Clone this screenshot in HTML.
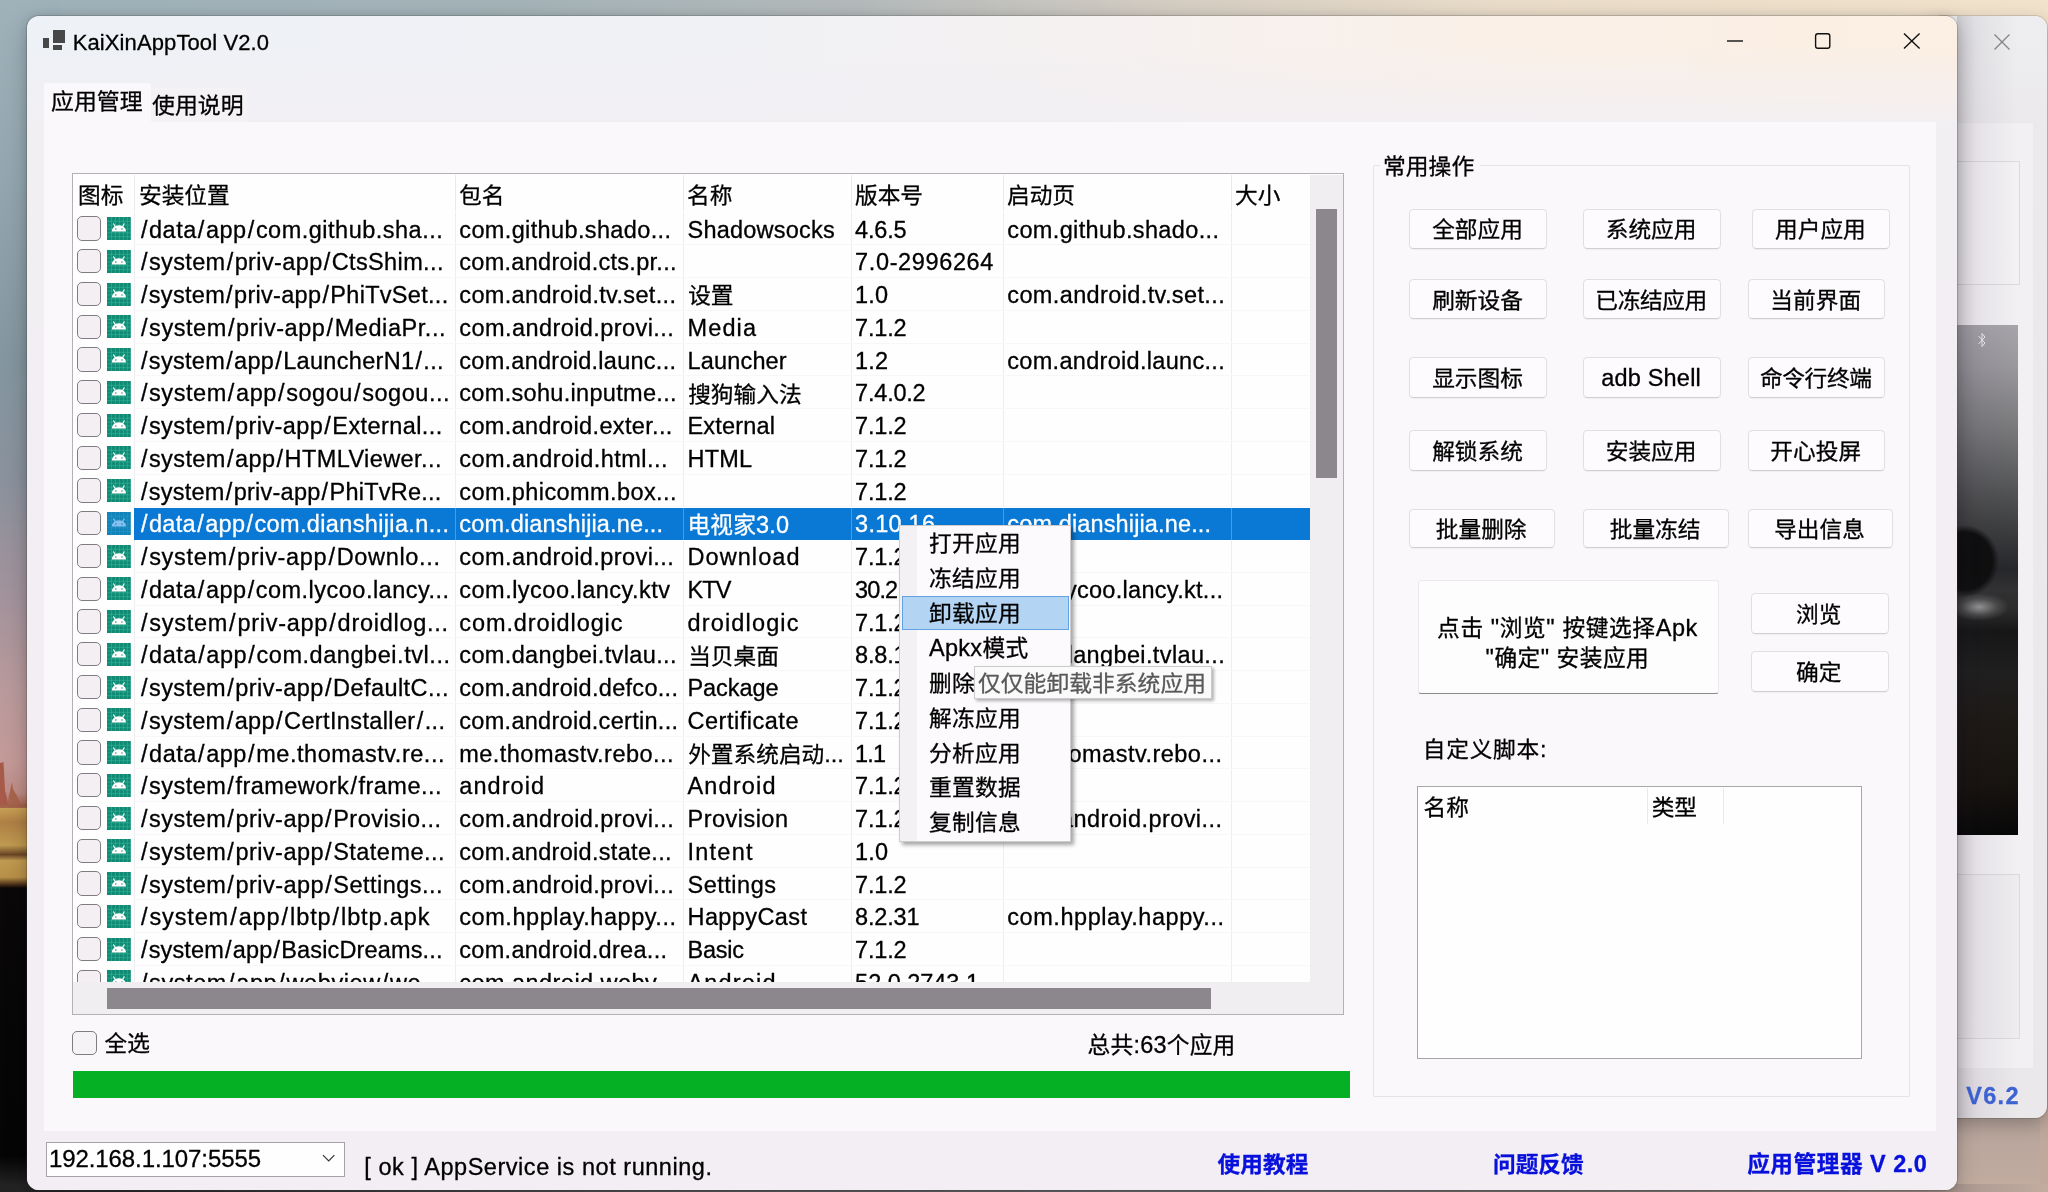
<!DOCTYPE html><html lang="zh-CN"><head><meta charset="utf-8"><title>KaiXinAppTool V2.0</title><style>

html,body{margin:0;padding:0}
body{width:2048px;height:1192px;overflow:hidden;position:relative;background:#8c9ca4;font-family:"Liberation Sans","Noto Sans CJK SC",sans-serif;color:#000}
#root{left:0;top:0;width:2048px;height:1192px;will-change:transform;overflow:hidden}
div,span,svg{position:absolute;box-sizing:border-box}
.t{white-space:pre;line-height:30px;height:30px}
.c{white-space:pre;line-height:30px;height:30px;text-align:center}
.ai{display:block}
i{font-style:normal;font-size:1.035em}
b{font-weight:normal;padding:0 1.1px}
.z,.btn span{transform:scaleY(.955);transform-origin:0 17px}
.t,.c,.btn span{-webkit-text-stroke:0.3px currentColor}
.cb{width:23.8px;height:24.2px;border:1.6px solid #807d82;border-radius:5px;background:#f3eff3}
.btn{border:1px solid #e2dfe3;border-bottom-color:#d2cfd3;border-radius:4.5px;background:#fdfbfd;box-shadow:0 1px 1px rgba(0,0,0,.04)}
.btn span{position:absolute;left:-1.6px;right:0;text-align:center;font-size:22.7px;white-space:pre;line-height:30px}
.gl{background:#f0edf1}

</style></head><body><div id="root">
<div id="wall" style="left:0;top:0;width:2048px;height:1192px;background:linear-gradient(90deg,#9fb2ba 0,#a4b3b8 25%,#b4babb 42%,#d6cec3 58%,#e9dcc9 73%,#f1e2cb 100%)"></div>
<div style="left:0;top:0;width:60px;height:1192px;background:linear-gradient(180deg,#9fb2ba 0,#94a7b0 15%,#8496a0 30%,#8a929d 40%,#a3939c 50%,#ba9a9c 58%,#c49a98 64%,#be8d86 66.5%,#a8604c 67.7%,#c8a055 67.8%,#b08045 69%,#c09a50 70.9%,#6a4526 71.7%,#c09a50 72.2%,#b89048 73.6%,#4a3018 74.2%,#0a0808 74.5%,#050505 97%,#2a2a2a 100%)"></div>
<svg style="left:0;top:760px" width="27" height="48" viewBox="0 0 27 48"><path d="M0 3L3.5 2L5 30L8 44L0 46Z" fill="#a85a4a"/><path d="M12 22L13 29L17 36L22 47.5L0 47.5L0 45L8 44L9 36Z" fill="#a8654e"/><path d="M0 44H27V48H0Z" fill="#a2604a" opacity=".6"/></svg>
<div style="left:1940px;top:1100px;width:108px;height:92px;background:linear-gradient(180deg,#b3a29b,#c3aca0)"></div>
<div style="left:2040px;top:0;width:8px;height:1192px;background:linear-gradient(180deg,#f1e2cb 0,#f0dcc0 20%,#e8c8a8 40%,#d8b8a0 60%,#c0a8a0 80%,#c0a89c 100%)"></div>
<div style="left:0;top:1184px;width:2048px;height:8px;background:linear-gradient(90deg,#222 0,#3a3a3a 15%,#5c5c5e 35%,#6e6e70 55%,#807a78 80%,#a8968e 95%,#c3aca0 100%)"></div>
<div id="w2" style="left:1930px;top:16px;width:117px;height:1102px;border-radius:12px;background:linear-gradient(180deg,#eeeef0 0,#ebe9ec 10%,#ebe8ec 100%);box-shadow:0 0 0 1px rgba(0,0,0,.12),0 6px 18px rgba(0,0,0,.25);overflow:hidden">
<div style="left:20.00px;top:106.50px;width:83.00px;height:945.00px;background:#f3f0f4"></div>
<div style="left:20.00px;top:145.00px;width:70.00px;height:124.00px;border:1px solid #dddadd;border-left:none;background:#f4f1f5"></div>
<div style="left:27.00px;top:308.50px;width:60.50px;height:510.50px;background:radial-gradient(ellipse 34px 36px at 8px 236px,#0c0c0c 0,#0e0e0e 80%,rgba(14,14,14,0) 100%),radial-gradient(ellipse 30px 14px at 22px 282px,rgba(190,190,190,.75) 0,rgba(120,120,120,.4) 60%,rgba(80,80,80,0) 100%),linear-gradient(180deg,#a7a4aa 0,#9a989d 8%,#7a7a7d 20%,#5b5c5e 30%,#3d3e3f 40%,#26272a 48%,#323233 52%,#2b2b2b 56%,#161616 60%,#1f1f1f 68%,#1d1915 78%,#17130f 90%,#070707 100%)"></div>
<div style="left:20.00px;top:857.50px;width:70.00px;height:165.00px;border:1px solid #dddadd;border-left:none;background:#efecf0"></div>
<svg style="left:62px;top:16px" width="20" height="20" viewBox="0 0 20 20"><path d="M2.5 2.5L17.5 17.5M17.5 2.5L2.5 17.5" stroke="#868686" stroke-width="1.3" fill="none"/></svg>
<svg style="left:47px;top:315px" width="10" height="18" viewBox="0 0 10 18"><path d="M1.5 5L8 12L5 15.5V2.5L8 6L1.5 13" stroke="#f0f0f0" stroke-width="1" fill="none"/></svg>
<div style="left:27.00px;top:0.00px;width:60.00px;height:1102.00px;background:linear-gradient(90deg,rgba(40,30,50,.16) 0,rgba(40,30,50,.07) 30%,rgba(40,30,50,0) 100%)"></div>
</div>
<span id="t1" class="t" style="left:1966.30px;top:1081.36px;font-size:23.50px;color:#3d62d2;font-weight:bold;letter-spacing:1.285px;">V6.2</span>
<div id="win" style="left:27px;top:16px;width:1930px;height:1173.5px;border-radius:12px;background:linear-gradient(90deg,#eef1f6 0,#f0f1f5 35%,#f5f1f1 55%,#faf0e8 75%,#fcefe3 100%);box-shadow:0 0 0 1px rgba(60,60,60,.22),0 8px 24px rgba(0,0,0,.22),0 0 8px rgba(0,0,0,.12);overflow:hidden">
<div style="left:0;top:0;width:1930px;height:1174px;background:linear-gradient(180deg,rgba(242,239,243,0) 0,rgba(242,239,243,0) 30px,rgba(242,239,243,1) 110px,#f2eef3 100%)"></div>
</div>
<div style="left:52.80px;top:30.20px;width:12.60px;height:13.20px;background:#474747"></div>
<div style="left:42.60px;top:37.90px;width:6.80px;height:10.40px;background:#474747"></div>
<div style="left:52.60px;top:44.90px;width:9.20px;height:5.40px;background:#474747"></div>
<span id="t2" class="t" style="left:72.70px;top:27.58px;font-size:22.00px;letter-spacing:0.108px;">KaiXinAppTool V2.0</span>
<svg style="left:1720px;top:26px" width="210" height="30" viewBox="0 0 210 30"><path d="M7 15H23" stroke="#111" stroke-width="1.4"/><rect x="95.6" y="7.8" width="14.2" height="14.4" rx="2.2" fill="none" stroke="#111" stroke-width="1.4"/><path d="M184 7.6L199.6 22.6M199.6 7.6L184 22.6" stroke="#111" stroke-width="1.4" fill="none"/></svg>
<div style="left:43.70px;top:122.00px;width:1892.20px;height:1008.80px;background:#fbf8fc"></div>
<div style="left:44.00px;top:83.00px;width:106.50px;height:40.00px;background:#fbf8fc;border-radius:3px 3px 0 0"></div>
<div style="left:150.50px;top:88.00px;width:96.00px;height:34.00px;background:#f5f2f6;border-radius:3px 3px 0 0"></div>
<span id="t3" class="t z" style="left:51.00px;top:86.27px;font-size:22.90px;">应用管理</span>
<span id="t4" class="t z" style="left:152.00px;top:89.57px;font-size:22.90px;">使用说明</span>
<div style="left:72.00px;top:173.20px;width:1272.00px;height:842.10px;background:#fffefe;border:1px solid #b4b1b5"></div>
<div id="lv" style="left:73px;top:174.5px;width:1237.3px;height:807.3px;overflow:hidden;background:#fffefe">
<div style="left:61.00px;top:0.00px;width:1.00px;height:810.00px;background:#f0edf1"></div>
<div style="left:381.80px;top:0.00px;width:1.00px;height:810.00px;background:#f0edf1"></div>
<div style="left:610.00px;top:0.00px;width:1.00px;height:810.00px;background:#f0edf1"></div>
<div style="left:778.00px;top:0.00px;width:1.00px;height:810.00px;background:#f0edf1"></div>
<div style="left:930.30px;top:0.00px;width:1.00px;height:810.00px;background:#f0edf1"></div>
<div style="left:1158.30px;top:0.00px;width:1.00px;height:810.00px;background:#f0edf1"></div>
<div style="left:61.00px;top:69.75px;width:1180.00px;height:1.00px;background:#f8f6f8"></div>
<div class="cb" style="left:4.30px;top:41.90px"></div>
<svg class="ai" style="left:34.00px;top:42.60px" width="23.8" height="23" viewBox="0 0 24 24" preserveAspectRatio="none"><rect width="24" height="24" fill="#108a74"/><path d="M0 4.5H24M0 8.5H24M0 12.5H24M0 16.5H24M0 20.5H24M4.5 0V24M8.5 0V24M12.5 0V24M16.5 0V24M20.5 0V24" stroke="#34b89a" stroke-width="0.6" fill="none"/><path d="M4.8 15.2a7.2 6.6 0 0 1 14.4 0z" fill="#ffffff"/><path d="M8.2 9.8L6.6 7.1M15.8 9.8L17.4 7.1" stroke="#f4fffc" stroke-width="1.1" stroke-linecap="round"/><circle cx="8.9" cy="12.6" r="0.75" fill="#108a74"/><circle cx="15.1" cy="12.6" r="0.75" fill="#108a74"/></svg>
<span id="t5" class="t" style="left:66.80px;top:40.06px;font-size:23.50px;letter-spacing:0.493px;"><b>/</b>data<b>/</b>app<b>/</b>com.github.sha...</span>
<span id="t6" class="t" style="left:386.30px;top:40.06px;font-size:23.50px;letter-spacing:0.366px;">com.github.shado...</span>
<span id="t7" class="t" style="left:614.50px;top:40.06px;font-size:23.50px;letter-spacing:0.220px;">Shadowsocks</span>
<span id="t8" class="t" style="left:782.10px;top:40.06px;font-size:23.50px;letter-spacing:-0.170px;">4.6.5</span>
<span id="t9" class="t" style="left:934.30px;top:40.06px;font-size:23.50px;letter-spacing:0.366px;">com.github.shado...</span>
<div style="left:61.00px;top:102.50px;width:1180.00px;height:1.00px;background:#f8f6f8"></div>
<div class="cb" style="left:4.30px;top:74.65px"></div>
<svg class="ai" style="left:34.00px;top:75.35px" width="23.8" height="23" viewBox="0 0 24 24" preserveAspectRatio="none"><rect width="24" height="24" fill="#108a74"/><path d="M0 4.5H24M0 8.5H24M0 12.5H24M0 16.5H24M0 20.5H24M4.5 0V24M8.5 0V24M12.5 0V24M16.5 0V24M20.5 0V24" stroke="#34b89a" stroke-width="0.6" fill="none"/><path d="M4.8 15.2a7.2 6.6 0 0 1 14.4 0z" fill="#ffffff"/><path d="M8.2 9.8L6.6 7.1M15.8 9.8L17.4 7.1" stroke="#f4fffc" stroke-width="1.1" stroke-linecap="round"/><circle cx="8.9" cy="12.6" r="0.75" fill="#108a74"/><circle cx="15.1" cy="12.6" r="0.75" fill="#108a74"/></svg>
<span id="t10" class="t" style="left:66.80px;top:72.81px;font-size:23.50px;letter-spacing:0.377px;"><b>/</b>system<b>/</b>priv-app<b>/</b>CtsShim...</span>
<span id="t11" class="t" style="left:386.30px;top:72.81px;font-size:23.50px;letter-spacing:0.280px;">com.android.cts.pr...</span>
<span id="t12" class="t" style="left:782.10px;top:72.81px;font-size:23.50px;letter-spacing:0.632px;">7.0-2996264</span>
<div style="left:61.00px;top:135.25px;width:1180.00px;height:1.00px;background:#f8f6f8"></div>
<div class="cb" style="left:4.30px;top:107.40px"></div>
<svg class="ai" style="left:34.00px;top:108.10px" width="23.8" height="23" viewBox="0 0 24 24" preserveAspectRatio="none"><rect width="24" height="24" fill="#108a74"/><path d="M0 4.5H24M0 8.5H24M0 12.5H24M0 16.5H24M0 20.5H24M4.5 0V24M8.5 0V24M12.5 0V24M16.5 0V24M20.5 0V24" stroke="#34b89a" stroke-width="0.6" fill="none"/><path d="M4.8 15.2a7.2 6.6 0 0 1 14.4 0z" fill="#ffffff"/><path d="M8.2 9.8L6.6 7.1M15.8 9.8L17.4 7.1" stroke="#f4fffc" stroke-width="1.1" stroke-linecap="round"/><circle cx="8.9" cy="12.6" r="0.75" fill="#108a74"/><circle cx="15.1" cy="12.6" r="0.75" fill="#108a74"/></svg>
<span id="t13" class="t" style="left:66.80px;top:105.56px;font-size:23.50px;letter-spacing:0.295px;"><b>/</b>system<b>/</b>priv-app<b>/</b>PhiTvSet...</span>
<span id="t14" class="t" style="left:386.30px;top:105.56px;font-size:23.50px;letter-spacing:0.342px;">com.android.tv.set...</span>
<span id="t15" class="t z" style="left:615.20px;top:105.83px;font-size:22.70px;">设置</span>
<span id="t16" class="t" style="left:782.10px;top:105.56px;font-size:23.50px;letter-spacing:0.114px;">1.0</span>
<span id="t17" class="t" style="left:934.30px;top:105.56px;font-size:23.50px;letter-spacing:0.377px;">com.android.tv.set...</span>
<div style="left:61.00px;top:168.00px;width:1180.00px;height:1.00px;background:#f8f6f8"></div>
<div class="cb" style="left:4.30px;top:140.15px"></div>
<svg class="ai" style="left:34.00px;top:140.85px" width="23.8" height="23" viewBox="0 0 24 24" preserveAspectRatio="none"><rect width="24" height="24" fill="#108a74"/><path d="M0 4.5H24M0 8.5H24M0 12.5H24M0 16.5H24M0 20.5H24M4.5 0V24M8.5 0V24M12.5 0V24M16.5 0V24M20.5 0V24" stroke="#34b89a" stroke-width="0.6" fill="none"/><path d="M4.8 15.2a7.2 6.6 0 0 1 14.4 0z" fill="#ffffff"/><path d="M8.2 9.8L6.6 7.1M15.8 9.8L17.4 7.1" stroke="#f4fffc" stroke-width="1.1" stroke-linecap="round"/><circle cx="8.9" cy="12.6" r="0.75" fill="#108a74"/><circle cx="15.1" cy="12.6" r="0.75" fill="#108a74"/></svg>
<span id="t18" class="t" style="left:66.80px;top:138.31px;font-size:23.50px;letter-spacing:0.554px;"><b>/</b>system<b>/</b>priv-app<b>/</b>MediaPr...</span>
<span id="t19" class="t" style="left:386.30px;top:138.31px;font-size:23.50px;letter-spacing:0.428px;">com.android.provi...</span>
<span id="t20" class="t" style="left:614.50px;top:138.31px;font-size:23.50px;letter-spacing:1.121px;">Media</span>
<span id="t21" class="t" style="left:782.10px;top:138.31px;font-size:23.50px;letter-spacing:-0.170px;">7.1.2</span>
<div style="left:61.00px;top:200.75px;width:1180.00px;height:1.00px;background:#f8f6f8"></div>
<div class="cb" style="left:4.30px;top:172.90px"></div>
<svg class="ai" style="left:34.00px;top:173.60px" width="23.8" height="23" viewBox="0 0 24 24" preserveAspectRatio="none"><rect width="24" height="24" fill="#108a74"/><path d="M0 4.5H24M0 8.5H24M0 12.5H24M0 16.5H24M0 20.5H24M4.5 0V24M8.5 0V24M12.5 0V24M16.5 0V24M20.5 0V24" stroke="#34b89a" stroke-width="0.6" fill="none"/><path d="M4.8 15.2a7.2 6.6 0 0 1 14.4 0z" fill="#ffffff"/><path d="M8.2 9.8L6.6 7.1M15.8 9.8L17.4 7.1" stroke="#f4fffc" stroke-width="1.1" stroke-linecap="round"/><circle cx="8.9" cy="12.6" r="0.75" fill="#108a74"/><circle cx="15.1" cy="12.6" r="0.75" fill="#108a74"/></svg>
<span id="t22" class="t" style="left:66.80px;top:171.06px;font-size:23.50px;letter-spacing:0.301px;"><b>/</b>system<b>/</b>app<b>/</b>LauncherN1<b>/</b>...</span>
<span id="t23" class="t" style="left:386.30px;top:171.06px;font-size:23.50px;letter-spacing:0.267px;">com.android.launc...</span>
<span id="t24" class="t" style="left:614.50px;top:171.06px;font-size:23.50px;letter-spacing:0.171px;">Launcher</span>
<span id="t25" class="t" style="left:782.10px;top:171.06px;font-size:23.50px;letter-spacing:0.114px;">1.2</span>
<span id="t26" class="t" style="left:934.30px;top:171.06px;font-size:23.50px;letter-spacing:0.304px;">com.android.launc...</span>
<div style="left:61.00px;top:233.50px;width:1180.00px;height:1.00px;background:#f8f6f8"></div>
<div class="cb" style="left:4.30px;top:205.65px"></div>
<svg class="ai" style="left:34.00px;top:206.35px" width="23.8" height="23" viewBox="0 0 24 24" preserveAspectRatio="none"><rect width="24" height="24" fill="#108a74"/><path d="M0 4.5H24M0 8.5H24M0 12.5H24M0 16.5H24M0 20.5H24M4.5 0V24M8.5 0V24M12.5 0V24M16.5 0V24M20.5 0V24" stroke="#34b89a" stroke-width="0.6" fill="none"/><path d="M4.8 15.2a7.2 6.6 0 0 1 14.4 0z" fill="#ffffff"/><path d="M8.2 9.8L6.6 7.1M15.8 9.8L17.4 7.1" stroke="#f4fffc" stroke-width="1.1" stroke-linecap="round"/><circle cx="8.9" cy="12.6" r="0.75" fill="#108a74"/><circle cx="15.1" cy="12.6" r="0.75" fill="#108a74"/></svg>
<span id="t27" class="t" style="left:66.80px;top:203.81px;font-size:23.50px;letter-spacing:0.545px;"><b>/</b>system<b>/</b>app<b>/</b>sogou<b>/</b>sogou...</span>
<span id="t28" class="t" style="left:386.30px;top:203.81px;font-size:23.50px;letter-spacing:0.311px;">com.sohu.inputme...</span>
<span id="t29" class="t z" style="left:615.20px;top:204.08px;font-size:22.70px;">搜狗输入法</span>
<span id="t30" class="t" style="left:782.10px;top:203.81px;font-size:23.50px;letter-spacing:-0.212px;">7.4.0.2</span>
<div style="left:61.00px;top:266.25px;width:1180.00px;height:1.00px;background:#f8f6f8"></div>
<div class="cb" style="left:4.30px;top:238.40px"></div>
<svg class="ai" style="left:34.00px;top:239.10px" width="23.8" height="23" viewBox="0 0 24 24" preserveAspectRatio="none"><rect width="24" height="24" fill="#108a74"/><path d="M0 4.5H24M0 8.5H24M0 12.5H24M0 16.5H24M0 20.5H24M4.5 0V24M8.5 0V24M12.5 0V24M16.5 0V24M20.5 0V24" stroke="#34b89a" stroke-width="0.6" fill="none"/><path d="M4.8 15.2a7.2 6.6 0 0 1 14.4 0z" fill="#ffffff"/><path d="M8.2 9.8L6.6 7.1M15.8 9.8L17.4 7.1" stroke="#f4fffc" stroke-width="1.1" stroke-linecap="round"/><circle cx="8.9" cy="12.6" r="0.75" fill="#108a74"/><circle cx="15.1" cy="12.6" r="0.75" fill="#108a74"/></svg>
<span id="t31" class="t" style="left:66.80px;top:236.56px;font-size:23.50px;letter-spacing:0.411px;"><b>/</b>system<b>/</b>priv-app<b>/</b>External...</span>
<span id="t32" class="t" style="left:386.30px;top:236.56px;font-size:23.50px;letter-spacing:0.353px;">com.android.exter...</span>
<span id="t33" class="t" style="left:614.50px;top:236.56px;font-size:23.50px;letter-spacing:0.183px;">External</span>
<span id="t34" class="t" style="left:782.10px;top:236.56px;font-size:23.50px;letter-spacing:-0.170px;">7.1.2</span>
<div style="left:61.00px;top:299.00px;width:1180.00px;height:1.00px;background:#f8f6f8"></div>
<div class="cb" style="left:4.30px;top:271.15px"></div>
<svg class="ai" style="left:34.00px;top:271.85px" width="23.8" height="23" viewBox="0 0 24 24" preserveAspectRatio="none"><rect width="24" height="24" fill="#108a74"/><path d="M0 4.5H24M0 8.5H24M0 12.5H24M0 16.5H24M0 20.5H24M4.5 0V24M8.5 0V24M12.5 0V24M16.5 0V24M20.5 0V24" stroke="#34b89a" stroke-width="0.6" fill="none"/><path d="M4.8 15.2a7.2 6.6 0 0 1 14.4 0z" fill="#ffffff"/><path d="M8.2 9.8L6.6 7.1M15.8 9.8L17.4 7.1" stroke="#f4fffc" stroke-width="1.1" stroke-linecap="round"/><circle cx="8.9" cy="12.6" r="0.75" fill="#108a74"/><circle cx="15.1" cy="12.6" r="0.75" fill="#108a74"/></svg>
<span id="t35" class="t" style="left:66.80px;top:269.31px;font-size:23.50px;letter-spacing:0.410px;"><b>/</b>system<b>/</b>app<b>/</b>HTMLViewer...</span>
<span id="t36" class="t" style="left:386.30px;top:269.31px;font-size:23.50px;letter-spacing:0.464px;">com.android.html...</span>
<span id="t37" class="t" style="left:614.50px;top:269.31px;font-size:23.50px;letter-spacing:0.172px;">HTML</span>
<span id="t38" class="t" style="left:782.10px;top:269.31px;font-size:23.50px;letter-spacing:-0.170px;">7.1.2</span>
<div style="left:61.00px;top:331.75px;width:1180.00px;height:1.00px;background:#f8f6f8"></div>
<div class="cb" style="left:4.30px;top:303.90px"></div>
<svg class="ai" style="left:34.00px;top:304.60px" width="23.8" height="23" viewBox="0 0 24 24" preserveAspectRatio="none"><rect width="24" height="24" fill="#108a74"/><path d="M0 4.5H24M0 8.5H24M0 12.5H24M0 16.5H24M0 20.5H24M4.5 0V24M8.5 0V24M12.5 0V24M16.5 0V24M20.5 0V24" stroke="#34b89a" stroke-width="0.6" fill="none"/><path d="M4.8 15.2a7.2 6.6 0 0 1 14.4 0z" fill="#ffffff"/><path d="M8.2 9.8L6.6 7.1M15.8 9.8L17.4 7.1" stroke="#f4fffc" stroke-width="1.1" stroke-linecap="round"/><circle cx="8.9" cy="12.6" r="0.75" fill="#108a74"/><circle cx="15.1" cy="12.6" r="0.75" fill="#108a74"/></svg>
<span id="t39" class="t" style="left:66.80px;top:302.06px;font-size:23.50px;letter-spacing:0.246px;"><b>/</b>system<b>/</b>priv-app<b>/</b>PhiTvRe...</span>
<span id="t40" class="t" style="left:386.30px;top:302.06px;font-size:23.50px;letter-spacing:0.408px;">com.phicomm.box...</span>
<span id="t41" class="t" style="left:782.10px;top:302.06px;font-size:23.50px;letter-spacing:-0.170px;">7.1.2</span>
<div style="left:61.30px;top:333.10px;width:1176.00px;height:32.20px;background:#0a78d5"></div>
<div style="left:381.80px;top:333.10px;width:1.00px;height:32.20px;background:#4a9be2"></div>
<div style="left:610.00px;top:333.10px;width:1.00px;height:32.20px;background:#4a9be2"></div>
<div style="left:778.00px;top:333.10px;width:1.00px;height:32.20px;background:#4a9be2"></div>
<div style="left:930.30px;top:333.10px;width:1.00px;height:32.20px;background:#4a9be2"></div>
<div style="left:1158.30px;top:333.10px;width:1.00px;height:32.20px;background:#4a9be2"></div>
<div class="cb" style="left:4.30px;top:336.65px"></div>
<svg class="ai" style="left:34.00px;top:337.35px" width="23.8" height="23" viewBox="0 0 24 24" preserveAspectRatio="none"><rect width="24" height="24" fill="#1283b8"/><path d="M0 4.5H24M0 8.5H24M0 12.5H24M0 16.5H24M0 20.5H24M4.5 0V24M8.5 0V24M12.5 0V24M16.5 0V24M20.5 0V24" stroke="#2b98cc" stroke-width="0.6" fill="none"/><path d="M4.8 15.2a7.2 6.6 0 0 1 14.4 0z" fill="#86c0f2"/><path d="M8.2 9.8L6.6 7.1M15.8 9.8L17.4 7.1" stroke="#86c0f2" stroke-width="1.1" stroke-linecap="round"/><circle cx="8.9" cy="12.6" r="0.75" fill="#1283b8"/><circle cx="15.1" cy="12.6" r="0.75" fill="#1283b8"/></svg>
<span id="t42" class="t" style="left:66.80px;top:334.81px;font-size:23.50px;color:#fff;letter-spacing:0.356px;"><b>/</b>data<b>/</b>app<b>/</b>com.dianshijia.n...</span>
<span id="t43" class="t" style="left:386.30px;top:334.81px;font-size:23.50px;color:#fff;letter-spacing:0.133px;">com.dianshijia.ne...</span>
<span id="t44" class="t" style="left:614.50px;top:335.08px;font-size:22.70px;color:#fff;letter-spacing:0.156px;">电视家<i>3.0</i></span>
<span id="t45" class="t" style="left:782.10px;top:334.81px;font-size:23.50px;color:#fff;letter-spacing:0.249px;">3.10.16</span>
<span id="t46" class="t" style="left:934.30px;top:334.81px;font-size:23.50px;color:#fff;letter-spacing:0.133px;">com.dianshijia.ne...</span>
<div style="left:61.00px;top:397.25px;width:1180.00px;height:1.00px;background:#f8f6f8"></div>
<div class="cb" style="left:4.30px;top:369.40px"></div>
<svg class="ai" style="left:34.00px;top:370.10px" width="23.8" height="23" viewBox="0 0 24 24" preserveAspectRatio="none"><rect width="24" height="24" fill="#108a74"/><path d="M0 4.5H24M0 8.5H24M0 12.5H24M0 16.5H24M0 20.5H24M4.5 0V24M8.5 0V24M12.5 0V24M16.5 0V24M20.5 0V24" stroke="#34b89a" stroke-width="0.6" fill="none"/><path d="M4.8 15.2a7.2 6.6 0 0 1 14.4 0z" fill="#ffffff"/><path d="M8.2 9.8L6.6 7.1M15.8 9.8L17.4 7.1" stroke="#f4fffc" stroke-width="1.1" stroke-linecap="round"/><circle cx="8.9" cy="12.6" r="0.75" fill="#108a74"/><circle cx="15.1" cy="12.6" r="0.75" fill="#108a74"/></svg>
<span id="t47" class="t" style="left:66.80px;top:367.56px;font-size:23.50px;letter-spacing:0.669px;"><b>/</b>system<b>/</b>priv-app<b>/</b>Downlo...</span>
<span id="t48" class="t" style="left:386.30px;top:367.56px;font-size:23.50px;letter-spacing:0.428px;">com.android.provi...</span>
<span id="t49" class="t" style="left:614.50px;top:367.56px;font-size:23.50px;letter-spacing:1.069px;">Download</span>
<span id="t50" class="t" style="left:782.10px;top:367.56px;font-size:23.50px;letter-spacing:-0.170px;">7.1.2</span>
<div style="left:61.00px;top:430.00px;width:1180.00px;height:1.00px;background:#f8f6f8"></div>
<div class="cb" style="left:4.30px;top:402.15px"></div>
<svg class="ai" style="left:34.00px;top:402.85px" width="23.8" height="23" viewBox="0 0 24 24" preserveAspectRatio="none"><rect width="24" height="24" fill="#108a74"/><path d="M0 4.5H24M0 8.5H24M0 12.5H24M0 16.5H24M0 20.5H24M4.5 0V24M8.5 0V24M12.5 0V24M16.5 0V24M20.5 0V24" stroke="#34b89a" stroke-width="0.6" fill="none"/><path d="M4.8 15.2a7.2 6.6 0 0 1 14.4 0z" fill="#ffffff"/><path d="M8.2 9.8L6.6 7.1M15.8 9.8L17.4 7.1" stroke="#f4fffc" stroke-width="1.1" stroke-linecap="round"/><circle cx="8.9" cy="12.6" r="0.75" fill="#108a74"/><circle cx="15.1" cy="12.6" r="0.75" fill="#108a74"/></svg>
<span id="t51" class="t" style="left:66.80px;top:400.31px;font-size:23.50px;letter-spacing:0.483px;"><b>/</b>data<b>/</b>app<b>/</b>com.lycoo.lancy...</span>
<span id="t52" class="t" style="left:386.30px;top:400.31px;font-size:23.50px;letter-spacing:0.483px;">com.lycoo.lancy.ktv</span>
<span id="t53" class="t" style="left:614.50px;top:400.31px;font-size:23.50px;letter-spacing:-0.900px;">KTV</span>
<span id="t54" class="t" style="left:782.10px;top:400.31px;font-size:23.50px;letter-spacing:-0.889px;">30.2.1</span>
<span id="t55" class="t" style="left:934.30px;top:400.31px;font-size:23.50px;letter-spacing:0.294px;">com.lycoo.lancy.kt...</span>
<div style="left:61.00px;top:462.75px;width:1180.00px;height:1.00px;background:#f8f6f8"></div>
<div class="cb" style="left:4.30px;top:434.90px"></div>
<svg class="ai" style="left:34.00px;top:435.60px" width="23.8" height="23" viewBox="0 0 24 24" preserveAspectRatio="none"><rect width="24" height="24" fill="#108a74"/><path d="M0 4.5H24M0 8.5H24M0 12.5H24M0 16.5H24M0 20.5H24M4.5 0V24M8.5 0V24M12.5 0V24M16.5 0V24M20.5 0V24" stroke="#34b89a" stroke-width="0.6" fill="none"/><path d="M4.8 15.2a7.2 6.6 0 0 1 14.4 0z" fill="#ffffff"/><path d="M8.2 9.8L6.6 7.1M15.8 9.8L17.4 7.1" stroke="#f4fffc" stroke-width="1.1" stroke-linecap="round"/><circle cx="8.9" cy="12.6" r="0.75" fill="#108a74"/><circle cx="15.1" cy="12.6" r="0.75" fill="#108a74"/></svg>
<span id="t56" class="t" style="left:66.80px;top:433.06px;font-size:23.50px;letter-spacing:0.722px;"><b>/</b>system<b>/</b>priv-app<b>/</b>droidlog...</span>
<span id="t57" class="t" style="left:386.30px;top:433.06px;font-size:23.50px;letter-spacing:0.899px;">com.droidlogic</span>
<span id="t58" class="t" style="left:614.50px;top:433.06px;font-size:23.50px;letter-spacing:1.156px;">droidlogic</span>
<span id="t59" class="t" style="left:782.10px;top:433.06px;font-size:23.50px;letter-spacing:-0.170px;">7.1.2</span>
<div style="left:61.00px;top:495.50px;width:1180.00px;height:1.00px;background:#f8f6f8"></div>
<div class="cb" style="left:4.30px;top:467.65px"></div>
<svg class="ai" style="left:34.00px;top:468.35px" width="23.8" height="23" viewBox="0 0 24 24" preserveAspectRatio="none"><rect width="24" height="24" fill="#108a74"/><path d="M0 4.5H24M0 8.5H24M0 12.5H24M0 16.5H24M0 20.5H24M4.5 0V24M8.5 0V24M12.5 0V24M16.5 0V24M20.5 0V24" stroke="#34b89a" stroke-width="0.6" fill="none"/><path d="M4.8 15.2a7.2 6.6 0 0 1 14.4 0z" fill="#ffffff"/><path d="M8.2 9.8L6.6 7.1M15.8 9.8L17.4 7.1" stroke="#f4fffc" stroke-width="1.1" stroke-linecap="round"/><circle cx="8.9" cy="12.6" r="0.75" fill="#108a74"/><circle cx="15.1" cy="12.6" r="0.75" fill="#108a74"/></svg>
<span id="t60" class="t" style="left:66.80px;top:465.81px;font-size:23.50px;letter-spacing:0.551px;"><b>/</b>data<b>/</b>app<b>/</b>com.dangbei.tvl...</span>
<span id="t61" class="t" style="left:386.30px;top:465.81px;font-size:23.50px;letter-spacing:0.362px;">com.dangbei.tvlau...</span>
<span id="t62" class="t z" style="left:615.20px;top:466.08px;font-size:22.70px;">当贝桌面</span>
<span id="t63" class="t" style="left:782.10px;top:465.81px;font-size:23.50px;letter-spacing:-0.170px;">8.8.1</span>
<span id="t64" class="t" style="left:934.30px;top:465.81px;font-size:23.50px;letter-spacing:0.372px;">com.dangbei.tvlau...</span>
<div style="left:61.00px;top:528.25px;width:1180.00px;height:1.00px;background:#f8f6f8"></div>
<div class="cb" style="left:4.30px;top:500.40px"></div>
<svg class="ai" style="left:34.00px;top:501.10px" width="23.8" height="23" viewBox="0 0 24 24" preserveAspectRatio="none"><rect width="24" height="24" fill="#108a74"/><path d="M0 4.5H24M0 8.5H24M0 12.5H24M0 16.5H24M0 20.5H24M4.5 0V24M8.5 0V24M12.5 0V24M16.5 0V24M20.5 0V24" stroke="#34b89a" stroke-width="0.6" fill="none"/><path d="M4.8 15.2a7.2 6.6 0 0 1 14.4 0z" fill="#ffffff"/><path d="M8.2 9.8L6.6 7.1M15.8 9.8L17.4 7.1" stroke="#f4fffc" stroke-width="1.1" stroke-linecap="round"/><circle cx="8.9" cy="12.6" r="0.75" fill="#108a74"/><circle cx="15.1" cy="12.6" r="0.75" fill="#108a74"/></svg>
<span id="t65" class="t" style="left:66.80px;top:498.56px;font-size:23.50px;letter-spacing:0.451px;"><b>/</b>system<b>/</b>priv-app<b>/</b>DefaultC...</span>
<span id="t66" class="t" style="left:386.30px;top:498.56px;font-size:23.50px;letter-spacing:0.303px;">com.android.defco...</span>
<span id="t67" class="t" style="left:614.50px;top:498.56px;font-size:23.50px;letter-spacing:-0.076px;">Package</span>
<span id="t68" class="t" style="left:782.10px;top:498.56px;font-size:23.50px;letter-spacing:-0.170px;">7.1.2</span>
<div style="left:61.00px;top:561.00px;width:1180.00px;height:1.00px;background:#f8f6f8"></div>
<div class="cb" style="left:4.30px;top:533.15px"></div>
<svg class="ai" style="left:34.00px;top:533.85px" width="23.8" height="23" viewBox="0 0 24 24" preserveAspectRatio="none"><rect width="24" height="24" fill="#108a74"/><path d="M0 4.5H24M0 8.5H24M0 12.5H24M0 16.5H24M0 20.5H24M4.5 0V24M8.5 0V24M12.5 0V24M16.5 0V24M20.5 0V24" stroke="#34b89a" stroke-width="0.6" fill="none"/><path d="M4.8 15.2a7.2 6.6 0 0 1 14.4 0z" fill="#ffffff"/><path d="M8.2 9.8L6.6 7.1M15.8 9.8L17.4 7.1" stroke="#f4fffc" stroke-width="1.1" stroke-linecap="round"/><circle cx="8.9" cy="12.6" r="0.75" fill="#108a74"/><circle cx="15.1" cy="12.6" r="0.75" fill="#108a74"/></svg>
<span id="t69" class="t" style="left:66.80px;top:531.31px;font-size:23.50px;letter-spacing:0.371px;"><b>/</b>system<b>/</b>app<b>/</b>CertInstaller<b>/</b>...</span>
<span id="t70" class="t" style="left:386.30px;top:531.31px;font-size:23.50px;letter-spacing:0.290px;">com.android.certin...</span>
<span id="t71" class="t" style="left:614.50px;top:531.31px;font-size:23.50px;letter-spacing:0.520px;">Certificate</span>
<span id="t72" class="t" style="left:782.10px;top:531.31px;font-size:23.50px;letter-spacing:-0.170px;">7.1.2</span>
<div style="left:61.00px;top:593.75px;width:1180.00px;height:1.00px;background:#f8f6f8"></div>
<div class="cb" style="left:4.30px;top:565.90px"></div>
<svg class="ai" style="left:34.00px;top:566.60px" width="23.8" height="23" viewBox="0 0 24 24" preserveAspectRatio="none"><rect width="24" height="24" fill="#108a74"/><path d="M0 4.5H24M0 8.5H24M0 12.5H24M0 16.5H24M0 20.5H24M4.5 0V24M8.5 0V24M12.5 0V24M16.5 0V24M20.5 0V24" stroke="#34b89a" stroke-width="0.6" fill="none"/><path d="M4.8 15.2a7.2 6.6 0 0 1 14.4 0z" fill="#ffffff"/><path d="M8.2 9.8L6.6 7.1M15.8 9.8L17.4 7.1" stroke="#f4fffc" stroke-width="1.1" stroke-linecap="round"/><circle cx="8.9" cy="12.6" r="0.75" fill="#108a74"/><circle cx="15.1" cy="12.6" r="0.75" fill="#108a74"/></svg>
<span id="t73" class="t" style="left:66.80px;top:564.06px;font-size:23.50px;letter-spacing:0.530px;"><b>/</b>data<b>/</b>app<b>/</b>me.thomastv.re...</span>
<span id="t74" class="t" style="left:386.30px;top:564.06px;font-size:23.50px;letter-spacing:0.459px;">me.thomastv.rebo...</span>
<span id="t75" class="t z" style="left:615.20px;top:564.33px;font-size:22.70px;">外置系统启动<i>...</i></span>
<span id="t76" class="t" style="left:782.10px;top:564.06px;font-size:23.50px;letter-spacing:-0.886px;">1.1</span>
<span id="t77" class="t" style="left:934.30px;top:564.06px;font-size:23.50px;letter-spacing:0.487px;">me.thomastv.rebo...</span>
<div style="left:61.00px;top:626.50px;width:1180.00px;height:1.00px;background:#f8f6f8"></div>
<div class="cb" style="left:4.30px;top:598.65px"></div>
<svg class="ai" style="left:34.00px;top:599.35px" width="23.8" height="23" viewBox="0 0 24 24" preserveAspectRatio="none"><rect width="24" height="24" fill="#108a74"/><path d="M0 4.5H24M0 8.5H24M0 12.5H24M0 16.5H24M0 20.5H24M4.5 0V24M8.5 0V24M12.5 0V24M16.5 0V24M20.5 0V24" stroke="#34b89a" stroke-width="0.6" fill="none"/><path d="M4.8 15.2a7.2 6.6 0 0 1 14.4 0z" fill="#ffffff"/><path d="M8.2 9.8L6.6 7.1M15.8 9.8L17.4 7.1" stroke="#f4fffc" stroke-width="1.1" stroke-linecap="round"/><circle cx="8.9" cy="12.6" r="0.75" fill="#108a74"/><circle cx="15.1" cy="12.6" r="0.75" fill="#108a74"/></svg>
<span id="t78" class="t" style="left:66.80px;top:596.81px;font-size:23.50px;letter-spacing:0.470px;"><b>/</b>system<b>/</b>framework<b>/</b>frame...</span>
<span id="t79" class="t" style="left:386.30px;top:596.81px;font-size:23.50px;letter-spacing:1.049px;">android</span>
<span id="t80" class="t" style="left:614.50px;top:596.81px;font-size:23.50px;letter-spacing:1.167px;">Android</span>
<span id="t81" class="t" style="left:782.10px;top:596.81px;font-size:23.50px;letter-spacing:-0.170px;">7.1.2</span>
<div style="left:61.00px;top:659.25px;width:1180.00px;height:1.00px;background:#f8f6f8"></div>
<div class="cb" style="left:4.30px;top:631.40px"></div>
<svg class="ai" style="left:34.00px;top:632.10px" width="23.8" height="23" viewBox="0 0 24 24" preserveAspectRatio="none"><rect width="24" height="24" fill="#108a74"/><path d="M0 4.5H24M0 8.5H24M0 12.5H24M0 16.5H24M0 20.5H24M4.5 0V24M8.5 0V24M12.5 0V24M16.5 0V24M20.5 0V24" stroke="#34b89a" stroke-width="0.6" fill="none"/><path d="M4.8 15.2a7.2 6.6 0 0 1 14.4 0z" fill="#ffffff"/><path d="M8.2 9.8L6.6 7.1M15.8 9.8L17.4 7.1" stroke="#f4fffc" stroke-width="1.1" stroke-linecap="round"/><circle cx="8.9" cy="12.6" r="0.75" fill="#108a74"/><circle cx="15.1" cy="12.6" r="0.75" fill="#108a74"/></svg>
<span id="t82" class="t" style="left:66.80px;top:629.56px;font-size:23.50px;letter-spacing:0.464px;"><b>/</b>system<b>/</b>priv-app<b>/</b>Provisio...</span>
<span id="t83" class="t" style="left:386.30px;top:629.56px;font-size:23.50px;letter-spacing:0.428px;">com.android.provi...</span>
<span id="t84" class="t" style="left:614.50px;top:629.56px;font-size:23.50px;letter-spacing:0.480px;">Provision</span>
<span id="t85" class="t" style="left:782.10px;top:629.56px;font-size:23.50px;letter-spacing:-0.170px;">7.1.2</span>
<span id="t86" class="t" style="left:934.30px;top:629.56px;font-size:23.50px;letter-spacing:0.438px;">com.android.provi...</span>
<div style="left:61.00px;top:692.00px;width:1180.00px;height:1.00px;background:#f8f6f8"></div>
<div class="cb" style="left:4.30px;top:664.15px"></div>
<svg class="ai" style="left:34.00px;top:664.85px" width="23.8" height="23" viewBox="0 0 24 24" preserveAspectRatio="none"><rect width="24" height="24" fill="#108a74"/><path d="M0 4.5H24M0 8.5H24M0 12.5H24M0 16.5H24M0 20.5H24M4.5 0V24M8.5 0V24M12.5 0V24M16.5 0V24M20.5 0V24" stroke="#34b89a" stroke-width="0.6" fill="none"/><path d="M4.8 15.2a7.2 6.6 0 0 1 14.4 0z" fill="#ffffff"/><path d="M8.2 9.8L6.6 7.1M15.8 9.8L17.4 7.1" stroke="#f4fffc" stroke-width="1.1" stroke-linecap="round"/><circle cx="8.9" cy="12.6" r="0.75" fill="#108a74"/><circle cx="15.1" cy="12.6" r="0.75" fill="#108a74"/></svg>
<span id="t87" class="t" style="left:66.80px;top:662.31px;font-size:23.50px;letter-spacing:0.465px;"><b>/</b>system<b>/</b>priv-app<b>/</b>Stateme...</span>
<span id="t88" class="t" style="left:386.30px;top:662.31px;font-size:23.50px;letter-spacing:0.306px;">com.android.state...</span>
<span id="t89" class="t" style="left:614.50px;top:662.31px;font-size:23.50px;letter-spacing:1.241px;">Intent</span>
<span id="t90" class="t" style="left:782.10px;top:662.31px;font-size:23.50px;letter-spacing:0.114px;">1.0</span>
<div style="left:61.00px;top:724.75px;width:1180.00px;height:1.00px;background:#f8f6f8"></div>
<div class="cb" style="left:4.30px;top:696.90px"></div>
<svg class="ai" style="left:34.00px;top:697.60px" width="23.8" height="23" viewBox="0 0 24 24" preserveAspectRatio="none"><rect width="24" height="24" fill="#108a74"/><path d="M0 4.5H24M0 8.5H24M0 12.5H24M0 16.5H24M0 20.5H24M4.5 0V24M8.5 0V24M12.5 0V24M16.5 0V24M20.5 0V24" stroke="#34b89a" stroke-width="0.6" fill="none"/><path d="M4.8 15.2a7.2 6.6 0 0 1 14.4 0z" fill="#ffffff"/><path d="M8.2 9.8L6.6 7.1M15.8 9.8L17.4 7.1" stroke="#f4fffc" stroke-width="1.1" stroke-linecap="round"/><circle cx="8.9" cy="12.6" r="0.75" fill="#108a74"/><circle cx="15.1" cy="12.6" r="0.75" fill="#108a74"/></svg>
<span id="t91" class="t" style="left:66.80px;top:695.06px;font-size:23.50px;letter-spacing:0.470px;"><b>/</b>system<b>/</b>priv-app<b>/</b>Settings...</span>
<span id="t92" class="t" style="left:386.30px;top:695.06px;font-size:23.50px;letter-spacing:0.428px;">com.android.provi...</span>
<span id="t93" class="t" style="left:614.50px;top:695.06px;font-size:23.50px;letter-spacing:0.511px;">Settings</span>
<span id="t94" class="t" style="left:782.10px;top:695.06px;font-size:23.50px;letter-spacing:-0.170px;">7.1.2</span>
<div style="left:61.00px;top:757.50px;width:1180.00px;height:1.00px;background:#f8f6f8"></div>
<div class="cb" style="left:4.30px;top:729.65px"></div>
<svg class="ai" style="left:34.00px;top:730.35px" width="23.8" height="23" viewBox="0 0 24 24" preserveAspectRatio="none"><rect width="24" height="24" fill="#108a74"/><path d="M0 4.5H24M0 8.5H24M0 12.5H24M0 16.5H24M0 20.5H24M4.5 0V24M8.5 0V24M12.5 0V24M16.5 0V24M20.5 0V24" stroke="#34b89a" stroke-width="0.6" fill="none"/><path d="M4.8 15.2a7.2 6.6 0 0 1 14.4 0z" fill="#ffffff"/><path d="M8.2 9.8L6.6 7.1M15.8 9.8L17.4 7.1" stroke="#f4fffc" stroke-width="1.1" stroke-linecap="round"/><circle cx="8.9" cy="12.6" r="0.75" fill="#108a74"/><circle cx="15.1" cy="12.6" r="0.75" fill="#108a74"/></svg>
<span id="t95" class="t" style="left:66.80px;top:727.81px;font-size:23.50px;letter-spacing:0.874px;"><b>/</b>system<b>/</b>app<b>/</b>lbtp<b>/</b>lbtp.apk</span>
<span id="t96" class="t" style="left:386.30px;top:727.81px;font-size:23.50px;letter-spacing:0.548px;">com.hpplay.happy...</span>
<span id="t97" class="t" style="left:614.50px;top:727.81px;font-size:23.50px;letter-spacing:0.406px;">HappyCast</span>
<span id="t98" class="t" style="left:782.10px;top:727.81px;font-size:23.50px;letter-spacing:-0.189px;">8.2.31</span>
<span id="t99" class="t" style="left:934.30px;top:727.81px;font-size:23.50px;letter-spacing:0.548px;">com.hpplay.happy...</span>
<div style="left:61.00px;top:790.25px;width:1180.00px;height:1.00px;background:#f8f6f8"></div>
<div class="cb" style="left:4.30px;top:762.40px"></div>
<svg class="ai" style="left:34.00px;top:763.10px" width="23.8" height="23" viewBox="0 0 24 24" preserveAspectRatio="none"><rect width="24" height="24" fill="#108a74"/><path d="M0 4.5H24M0 8.5H24M0 12.5H24M0 16.5H24M0 20.5H24M4.5 0V24M8.5 0V24M12.5 0V24M16.5 0V24M20.5 0V24" stroke="#34b89a" stroke-width="0.6" fill="none"/><path d="M4.8 15.2a7.2 6.6 0 0 1 14.4 0z" fill="#ffffff"/><path d="M8.2 9.8L6.6 7.1M15.8 9.8L17.4 7.1" stroke="#f4fffc" stroke-width="1.1" stroke-linecap="round"/><circle cx="8.9" cy="12.6" r="0.75" fill="#108a74"/><circle cx="15.1" cy="12.6" r="0.75" fill="#108a74"/></svg>
<span id="t100" class="t" style="left:66.80px;top:760.56px;font-size:23.50px;letter-spacing:0.142px;"><b>/</b>system<b>/</b>app<b>/</b>BasicDreams...</span>
<span id="t101" class="t" style="left:386.30px;top:760.56px;font-size:23.50px;letter-spacing:0.290px;">com.android.drea...</span>
<span id="t102" class="t" style="left:614.50px;top:760.56px;font-size:23.50px;letter-spacing:-0.242px;">Basic</span>
<span id="t103" class="t" style="left:782.10px;top:760.56px;font-size:23.50px;letter-spacing:-0.170px;">7.1.2</span>
<div style="left:61.00px;top:823.00px;width:1180.00px;height:1.00px;background:#f8f6f8"></div>
<div class="cb" style="left:4.30px;top:795.15px"></div>
<svg class="ai" style="left:34.00px;top:795.85px" width="23.8" height="23" viewBox="0 0 24 24" preserveAspectRatio="none"><rect width="24" height="24" fill="#108a74"/><path d="M0 4.5H24M0 8.5H24M0 12.5H24M0 16.5H24M0 20.5H24M4.5 0V24M8.5 0V24M12.5 0V24M16.5 0V24M20.5 0V24" stroke="#34b89a" stroke-width="0.6" fill="none"/><path d="M4.8 15.2a7.2 6.6 0 0 1 14.4 0z" fill="#ffffff"/><path d="M8.2 9.8L6.6 7.1M15.8 9.8L17.4 7.1" stroke="#f4fffc" stroke-width="1.1" stroke-linecap="round"/><circle cx="8.9" cy="12.6" r="0.75" fill="#108a74"/><circle cx="15.1" cy="12.6" r="0.75" fill="#108a74"/></svg>
<span id="t104" class="t" style="left:66.80px;top:793.31px;font-size:23.50px;letter-spacing:0.579px;"><b>/</b>system<b>/</b>app<b>/</b>webview<b>/</b>we...</span>
<span id="t105" class="t" style="left:386.30px;top:793.31px;font-size:23.50px;letter-spacing:0.452px;">com.android.webv...</span>
<span id="t106" class="t" style="left:614.50px;top:793.31px;font-size:23.50px;letter-spacing:1.167px;">Android</span>
<span id="t107" class="t" style="left:782.10px;top:793.31px;font-size:23.50px;letter-spacing:-0.026px;">52.0.2743.1</span>
</div>
<div style="left:73.00px;top:174.50px;width:1237.30px;height:37.30px;background:#fffefe"></div>
<div style="left:134.00px;top:175.00px;width:1.00px;height:36.00px;background:#ebe8ec"></div>
<div style="left:454.80px;top:175.00px;width:1.00px;height:36.00px;background:#ebe8ec"></div>
<div style="left:683.00px;top:175.00px;width:1.00px;height:36.00px;background:#ebe8ec"></div>
<div style="left:851.00px;top:175.00px;width:1.00px;height:36.00px;background:#ebe8ec"></div>
<div style="left:1003.30px;top:175.00px;width:1.00px;height:36.00px;background:#ebe8ec"></div>
<div style="left:1231.30px;top:175.00px;width:1.00px;height:36.00px;background:#ebe8ec"></div>
<span id="t108" class="t z" style="left:78.00px;top:180.43px;font-size:22.70px;">图标</span>
<span id="t109" class="t z" style="left:139.00px;top:180.43px;font-size:22.70px;">安装位置</span>
<span id="t110" class="t z" style="left:459.00px;top:180.43px;font-size:22.70px;">包名</span>
<span id="t111" class="t z" style="left:687.00px;top:180.43px;font-size:22.70px;">名称</span>
<span id="t112" class="t z" style="left:855.00px;top:180.43px;font-size:22.70px;">版本号</span>
<span id="t113" class="t z" style="left:1007.00px;top:180.43px;font-size:22.70px;">启动页</span>
<span id="t114" class="t z" style="left:1235.00px;top:180.43px;font-size:22.70px;">大小</span>
<div style="left:1310.30px;top:174.50px;width:32.70px;height:807.30px;background:#f1eef2"></div>
<div style="left:1316.20px;top:208.60px;width:20.70px;height:269.00px;background:#8b878d"></div>
<div style="left:73.00px;top:981.80px;width:1270.00px;height:32.60px;background:#f1eef2"></div>
<div style="left:106.50px;top:988.30px;width:1104.00px;height:20.40px;background:#8b878d"></div>
<div class="cb" style="left:72.4px;top:1031px;width:24.2px;height:23.8px;background:#f6f3f6"></div>
<span id="t115" class="t z" style="left:104.50px;top:1028.43px;font-size:22.70px;">全选</span>
<span id="t116" class="t" style="left:1087.60px;top:1029.63px;font-size:22.70px;letter-spacing:0.229px;">总共<i>:63</i>个应用</span>
<div style="left:72.60px;top:1071.00px;width:1277.60px;height:27.40px;background:#06b025"></div>
<div style="left:1373.30px;top:164.70px;width:537.00px;height:932.70px;border:1px solid #e6e2e7;border-radius:2px"></div>
<div style="left:1380.00px;top:150.00px;width:100.00px;height:30.00px;background:#fbf8fc"></div>
<span id="t117" class="t z" style="left:1383.00px;top:150.80px;font-size:22.80px;">常用操作</span>
<div class="btn" style="left:1409.30px;top:208.90px;width:138.10px;height:39.90px"><span style="top:4.45px;">全部应用</span></div>
<div class="btn" style="left:1583.20px;top:208.90px;width:137.40px;height:39.90px"><span style="top:4.45px;">系统应用</span></div>
<div class="btn" style="left:1752.40px;top:208.90px;width:137.70px;height:39.90px"><span style="top:4.45px;">用户应用</span></div>
<div class="btn" style="left:1409.30px;top:279.40px;width:138.10px;height:39.30px"><span style="top:4.15px;">刷新设备</span></div>
<div class="btn" style="left:1583.20px;top:279.40px;width:137.40px;height:39.30px"><span style="top:4.15px;letter-spacing:-0.4px;">已冻结应用</span></div>
<div class="btn" style="left:1747.70px;top:279.40px;width:137.70px;height:39.30px"><span style="top:4.15px;">当前界面</span></div>
<div class="btn" style="left:1409.30px;top:357.20px;width:138.10px;height:40.50px"><span style="top:4.75px;">显示图标</span></div>
<div class="btn" style="left:1583.20px;top:357.20px;width:137.40px;height:40.50px"><span style="top:4.75px;font-size:23.5px;letter-spacing:0.2px;transform:none;">adb Shell</span></div>
<div class="btn" style="left:1747.70px;top:357.20px;width:137.70px;height:40.50px"><span style="top:4.75px;letter-spacing:-0.4px;">命令行终端</span></div>
<div class="btn" style="left:1409.30px;top:430.00px;width:138.10px;height:40.50px"><span style="top:4.75px;">解锁系统</span></div>
<div class="btn" style="left:1583.20px;top:430.00px;width:137.40px;height:40.50px"><span style="top:4.75px;">安装应用</span></div>
<div class="btn" style="left:1747.70px;top:430.00px;width:137.70px;height:40.50px"><span style="top:4.75px;">开心投屏</span></div>
<div class="btn" style="left:1409.30px;top:509.00px;width:145.40px;height:39.40px"><span style="top:4.20px;">批量删除</span></div>
<div class="btn" style="left:1583.20px;top:509.00px;width:145.40px;height:39.40px"><span style="top:4.20px;">批量冻结</span></div>
<div class="btn" style="left:1747.70px;top:509.00px;width:145.30px;height:39.40px"><span style="top:4.20px;">导出信息</span></div>
<div class="btn" style="left:1750.60px;top:593.30px;width:138.00px;height:40.40px"><span style="top:4.70px;">浏览</span></div>
<div class="btn" style="left:1750.60px;top:651.40px;width:138.00px;height:40.50px"><span style="top:4.75px;">确定</span></div>
<div style="left:1417.50px;top:580.30px;width:301.20px;height:113.60px;background:#fefdfe;border:1px solid #ece9ed;border-bottom:1.3px solid #8d8a8e;border-radius:3px"></div>
<span id="t118" class="t" style="left:1437.10px;top:613.43px;font-size:22.70px;letter-spacing:0.606px;">点击<i> "</i>浏览<i>" </i>按键选择<i>Apk</i></span>
<span id="t119" class="t" style="left:1485.60px;top:643.03px;font-size:22.70px;letter-spacing:0.482px;"><i>"</i>确定<i>" </i>安装应用</span>
<span id="t120" class="t z" style="left:1422.80px;top:734.13px;font-size:22.70px;letter-spacing:0.746px;">自定义脚本<i>:</i></span>
<div style="left:1417.30px;top:786.30px;width:444.40px;height:273.00px;background:#fffefe;border:1px solid #a9a6aa"></div>
<div style="left:1647.20px;top:788.00px;width:1.00px;height:36.00px;background:#ebe8ec"></div>
<div style="left:1723.30px;top:788.00px;width:1.00px;height:36.00px;background:#ebe8ec"></div>
<span id="t121" class="t z" style="left:1423.50px;top:792.33px;font-size:22.70px;">名称</span>
<span id="t122" class="t z" style="left:1651.70px;top:792.33px;font-size:22.70px;">类型</span>
<div style="left:46.40px;top:1141.70px;width:298.20px;height:35.00px;background:#fffeff;border:1px solid #a5a2a6"></div>
<span id="t123" class="t" style="left:48.90px;top:1143.98px;font-size:24.00px;letter-spacing:-0.079px;">192.168.1.107:5555</span>
<svg style="left:320px;top:1151px" width="18" height="14" viewBox="0 0 18 14"><path d="M3 4.2L8.7 10L14.4 4.2" stroke="#333" stroke-width="1.2" fill="none"/></svg>
<span id="t124" class="t" style="left:364.30px;top:1152.36px;font-size:23.50px;letter-spacing:0.537px;">[ ok ] AppService is not running.</span>
<span id="t125" class="t z" style="left:1217.60px;top:1149.33px;font-size:22.70px;color:#0810dc;font-weight:bold;">使用教程</span>
<span id="t126" class="t z" style="left:1493.00px;top:1149.33px;font-size:22.70px;color:#0810dc;font-weight:bold;">问题反馈</span>
<span id="t127" class="t" style="left:1747.20px;top:1149.33px;font-size:22.70px;color:#0810dc;font-weight:bold;letter-spacing:0.489px;">应用管理器<i> V 2.0</i></span>
<div style="left:899.30px;top:524.60px;width:171.50px;height:317.40px;background:#fcfafc;border:1px solid #cfcccf;box-shadow:3px 3px 4px rgba(0,0,0,.35)"></div>
<div style="left:900.30px;top:525.60px;width:17.00px;height:315.40px;background:#f3f1f4"></div>
<div style="left:901.60px;top:595.60px;width:167.20px;height:34.80px;background:#b4d4f3;border:1px solid #62a3e4"></div>
<span id="t128" class="t z" style="left:929.00px;top:528.33px;font-size:22.70px;letter-spacing:0.3px;">打开应用</span>
<span id="t129" class="t z" style="left:929.00px;top:563.21px;font-size:22.70px;letter-spacing:0.3px;">冻结应用</span>
<span id="t130" class="t z" style="left:929.00px;top:598.09px;font-size:22.70px;letter-spacing:0.3px;">卸载应用</span>
<span id="t131" class="t" style="left:929.00px;top:632.97px;font-size:22.70px;letter-spacing:0.3px;"><i>Apkx</i>模式</span>
<span id="t132" class="t z" style="left:929.00px;top:667.85px;font-size:22.70px;letter-spacing:0.3px;">删除</span>
<span id="t133" class="t z" style="left:929.00px;top:702.73px;font-size:22.70px;letter-spacing:0.3px;">解冻应用</span>
<span id="t134" class="t z" style="left:929.00px;top:737.61px;font-size:22.70px;letter-spacing:0.3px;">分析应用</span>
<span id="t135" class="t z" style="left:929.00px;top:772.49px;font-size:22.70px;letter-spacing:0.3px;">重置数据</span>
<span id="t136" class="t z" style="left:929.00px;top:807.37px;font-size:22.70px;letter-spacing:0.3px;">复制信息</span>
<div style="left:974.30px;top:665.50px;width:237.80px;height:33.00px;background:#fafafa;border:1px solid #cbcbcb;box-shadow:2px 2px 3px rgba(0,0,0,.3)"></div>
<span id="t137" class="t z" style="left:978.00px;top:667.60px;font-size:22.80px;color:#585858;">仅仅能卸载非系统应用</span>
</div></body></html>
